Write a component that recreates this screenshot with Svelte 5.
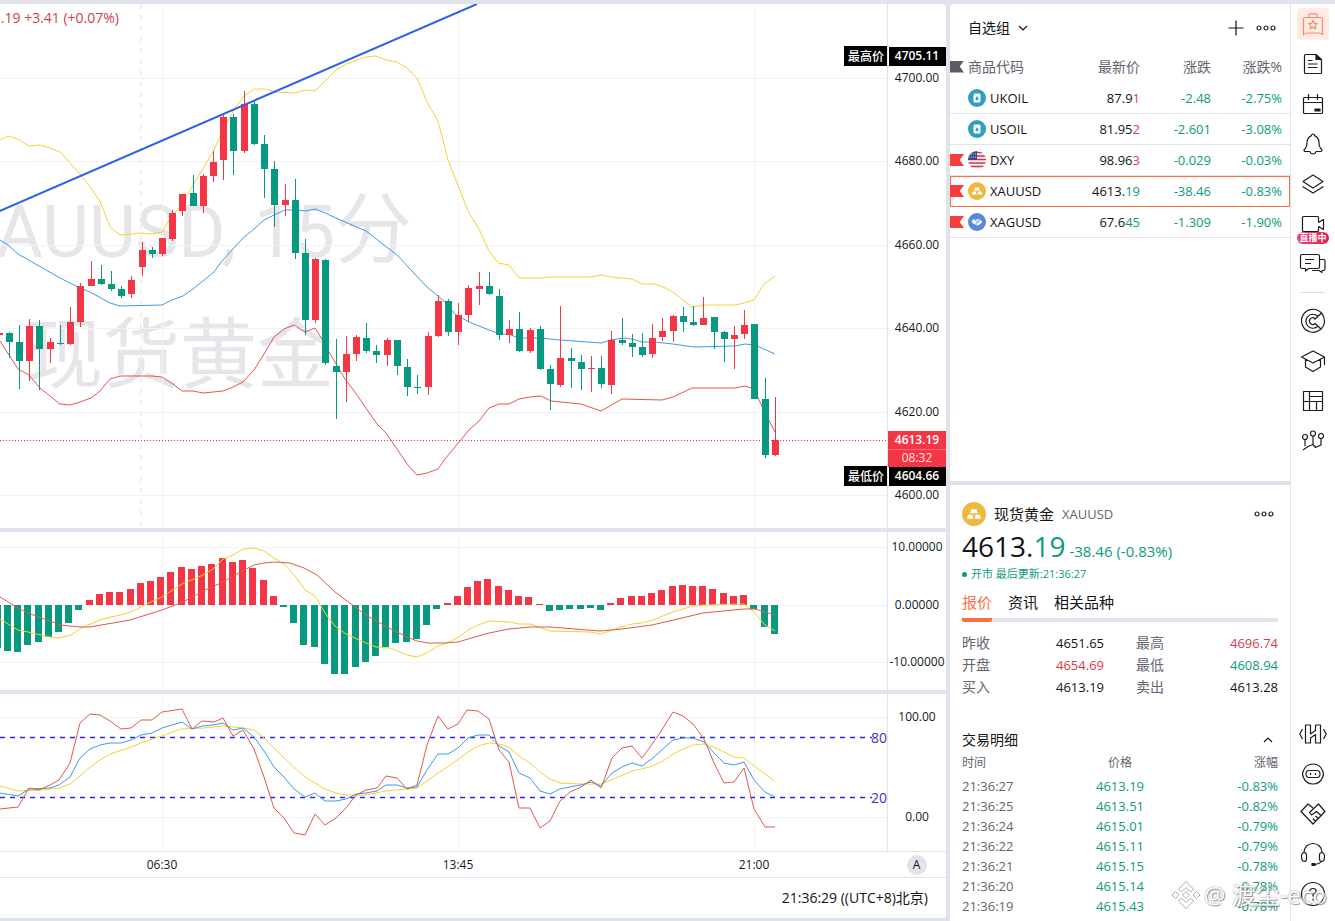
<script>
  let plotWidth = $state(887);
  let activeTab = $state('报价');
  let activeTool = $state('自选');
  let tradesOpen = $state(true);

  const UP = '#f23645';
  const DOWN = '#089981';

  // the newest bar keeps its distance from the price scale, older bars run off to the left
  let left = $derived(887 - plotWidth);

  const barX = (i) => Math.floor(10.213 * i - 0.9);
  const histX = (i) => Math.floor(10.227 * i - 2.9);

  // direction, high, body top, body bottom, low
  const candles = `
    r 333 333 335 335|g 332 333 342 358|g 325 342 361 389|r 319 326 361 381|g 320 326 349 390|r 338 342 349 363
    |g 325 343 344 345|r 307 322 344 345|r 283 286 322 327|r 261 279 286 286|g 265 279 284 285|g 271 284 289 291
    |g 286 289 296 298|r 276 280 294 298|r 242 250 267 276|g 247 250 254 258|r 238 238 254 256|r 210 213 239 241
    |r 194 194 211 216|g 175 193 206 206|r 174 176 206 213|r 151 162 176 182|r 114 117 160 180|g 114 117 151 175
    |r 91 104 151 153|g 100 104 144 145|g 135 144 169 198|g 161 169 205 227|r 184 200 205 216|g 179 200 253 259
    |g 239 253 320 335|r 258 259 320 323|g 259 260 363 365|g 339 366 372 419|r 336 354 372 402|r 335 337 354 361
    |g 323 338 351 353|g 345 351 355 363|r 338 340 355 366|g 340 340 366 375|g 359 367 387 396|g 375 387 388 394
    |r 332 336 387 395|r 295 301 336 337|g 299 301 332 336|r 303 315 332 345|r 285 288 315 322|r 272 286 289 305
    |g 272 286 294 295|g 289 296 335 340|r 320 329 335 343|g 312 329 351 352|r 328 330 351 353|g 326 329 369 370
    |g 365 369 384 410|r 306 358 385 387|g 348 358 361 388|g 355 362 369 390|r 356 368 369 392|g 356 368 384 388
    |r 331 340 385 394|g 318 340 343 345|g 334 343 347 357|g 333 347 355 357|r 324 338 354 358|r 318 331 337 341
    |r 315 316 331 342|g 307 316 322 332|g 306 322 325 326|r 297 318 325 325|g 317 317 332 349|g 331 332 339 362
    |r 326 335 339 369|r 310 325 334 339|g 324 324 399 399|g 378 399 455 458|r 397 440 455 456`
    .split('|')
    .map((row, i) => {
      const [dir, ...v] = row.trim().split(' ');
      const [high, top, bottom, low] = v.map(Number);
      return { x: barX(i), color: dir === 'r' ? UP : DOWN, high, top, bottom, low };
    });

  const ZERO = 605;
  const hist = [
    648, 651, 652, 645, 642, 637, 632, 623, 610, 600, 594, 592, 592, 589, 583, 581, 577, 572, 567, 569,
    566, 564, 558, 562, 560, 568, 580, 596, 607, 623, 645, 647, 664, 674, 674, 667, 662, 656, 647, 643,
    642, 639, 625, 609, 603, 596, 587, 581, 579, 586, 590, 596, 597, 604, 611, 610, 609, 609, 608, 610,
    603, 598, 596, 596, 593, 590, 586, 585, 586, 586, 589, 593, 596, 595, 609, 627, 634
  ];

  const boll = {
    upper: '0,140 8,136 18,139 29,146 40,145 50,148 60,152 80,174 90,187 100,201 110,227 120,235 141,233 151,234 162,232 172,216 183,203 193,185 213,152 223,130 234,110 243,97 254,89 265,89 275,92 295,93 305,90 315,91 325,81 336,70 346,64 365,57 376,56 386,60 397,62 407,68 417,78 427,102 438,121 448,160 459,188 468,211 479,229 488,249 498,263 509,265 519,278 540,278 549,277 590,277 601,275 611,277 632,279 642,284 654,284 663,287 673,292 683,300 692,307 704,305 735,305 744,303 754,300 764,284 775,276',
    middle: '0,240 8,245 18,254 46,270 60,278 80,288 90,292 110,303 120,306 162,305 172,300 183,296 193,289 203,281 214,272 222,261 233,249 243,238 254,229 264,220 274,215 285,210 295,210 305,211 315,209 325,213 345,222 366,231 397,255 411,270 427,287 438,296 445,302 455,314 469,322 489,330 500,334 509,334 518,338 540,338 560,340 601,343 611,340 623,338 632,339 642,342 654,342 673,344 693,347 735,346 745,344 755,345 775,354',
    lower: '0,341 18,369 29,375 40,388 60,404 70,405 80,402 91,398 100,391 110,379 120,376 152,376 162,377 173,384 182,391 193,391 203,393 223,391 233,387 243,382 254,370 264,354 274,337 284,329 294,325 305,332 315,328 322,339 329,352 345,379 357,395 377,424 386,433 397,449 407,464 417,475 427,473 438,469 445,459 469,430 479,421 489,408 499,404 509,404 519,399 530,397 541,396 551,401 581,404 601,411 622,399 662,400 673,397 692,388 735,388 745,386 754,389 764,411 775,432'
  };

  const macd = {
    dif: '0,619 18,630 28,632 50,637 59,638 71,635 81,628 100,620 111,617 121,615 131,612 141,607 151,602 162,597 182,584 203,575 213,569 223,559 233,555 243,549 254,548 264,551 274,558 284,564 295,576 305,590 315,596 325,613 335,626 346,634 366,643 376,647 390,648 407,655 417,657 427,653 438,646 449,642 459,637 468,630 478,625 489,621 509,622 519,624 530,624 550,631 590,632 601,634 621,627 632,624 642,623 653,620 663,616 673,612 693,606 704,605 744,604 754,612 765,625 775,631',
    dea: '0,597 18,608 28,613 50,621 60,625 70,626 80,627 90,627 130,620 162,610 183,602 203,591 223,582 244,570 254,565 264,563 275,562 290,563 304,568 317,575 335,592 366,615 387,627 407,637 417,641 428,643 445,643 458,642 468,639 489,633 509,629 530,627 550,627 600,631 622,629 652,625 682,618 703,613 733,610 744,609 755,609 765,612 775,615'
  };

  const kdj = {
    k: '0,793 18,796 29,789 50,788 59,785 70,777 80,758 90,749 100,745 110,743 121,743 131,740 141,735 152,733 162,728 182,722 192,729 202,726 213,725 223,723 233,730 243,728 254,737 264,751 274,767 284,777 294,789 305,797 315,793 325,801 336,801 346,799 356,794 366,793 377,791 386,785 397,785 407,788 417,787 427,770 438,754 448,754 458,748 468,738 478,735 489,735 499,746 509,752 519,773 530,778 540,791 550,794 560,789 570,787 581,785 591,782 601,786 612,773 622,767 632,763 642,766 653,758 663,749 673,740 683,738 693,738 704,742 714,753 724,763 734,765 744,762 754,780 765,792 775,797',
    d: '0,786 18,791 40,790 59,788 70,784 80,776 90,767 100,760 110,754 131,747 141,743 162,736 182,729 203,728 223,726 243,728 254,730 264,738 284,758 305,777 315,783 325,789 336,793 346,795 366,795 386,791 407,789 417,788 427,781 438,773 449,766 468,752 478,746 489,743 499,744 509,747 519,756 530,763 540,772 550,779 560,783 580,784 601,784 611,780 632,771 642,769 652,766 663,761 673,754 683,749 693,745 704,744 714,747 724,752 734,757 744,758 754,766 765,774 775,781',
    j: '0,809 18,807 29,788 39,790 50,785 59,780 70,763 80,723 90,714 100,715 110,721 121,729 131,728 141,720 152,720 162,712 182,709 192,729 202,721 214,722 223,718 233,736 243,730 254,749 264,777 274,808 284,818 294,833 305,835 315,814 325,825 336,818 346,808 356,795 366,790 377,788 386,776 397,778 407,789 417,785 427,745 438,716 448,729 458,724 467,710 478,711 489,719 499,750 509,762 519,808 530,808 540,828 550,821 560,801 570,792 581,787 591,780 601,788 612,758 622,748 632,746 642,758 653,743 663,728 673,712 683,716 693,724 704,739 714,763 724,783 734,782 744,768 754,809 765,827 775,827'
  };

  const times = [[162, '06:30'], [458, '13:45'], [754, '21:00']];
  const prices = [[78, '4700.00'], [161, '4680.00'], [245, '4660.00'], [328, '4640.00'], [412, '4620.00'], [495, '4600.00']];
  const macdScale = [[547, '10.00000'], [605, '0.00000'], [662, '-10.00000']];
  const kdjScale = [[717, '100.00'], [817, '0.00']];

  const watchlist = [
    { code: 'UKOIL', icon: 'oil', flag: false, head: '87.9', tail: '1', dir: 'up', chg: '-2.48', pct: '-2.75%' },
    { code: 'USOIL', icon: 'oil', flag: false, head: '81.95', tail: '2', dir: 'up', chg: '-2.601', pct: '-3.08%' },
    { code: 'DXY', icon: 'us', flag: true, head: '98.96', tail: '3', dir: 'up', chg: '-0.029', pct: '-0.03%' },
    { code: 'XAUUSD', icon: 'gold', flag: true, head: '4613.', tail: '19', dir: 'down', chg: '-38.46', pct: '-0.83%' },
    { code: 'XAGUSD', icon: 'silver', flag: true, head: '67.6', tail: '45', dir: 'down', chg: '-1.309', pct: '-1.90%' }
  ];
  let selected = $state('XAUUSD');

  const quotes = [
    ['昨收', '4651.65', ''], ['最高', '4696.74', 'up'],
    ['开盘', '4654.69', 'up'], ['最低', '4608.94', 'down'],
    ['买入', '4613.19', ''], ['卖出', '4613.28', '']
  ];

  const trades = [
    ['21:36:27', '4613.19', '-0.83%'],
    ['21:36:25', '4613.51', '-0.82%'],
    ['21:36:24', '4615.01', '-0.79%'],
    ['21:36:22', '4615.11', '-0.79%'],
    ['21:36:21', '4615.15', '-0.78%'],
    ['21:36:20', '4615.14', '-0.78%'],
    ['21:36:19', '4615.43', '-0.78%']
  ];

  const topTools = [
    ['自选', 'M4.5 8.8Q4.5 7.5 5.8 7.5H22.2Q23.5 7.5 23.5 8.8V24.5Q21.5 23 19 23H9Q6.5 23 4.5 24.5ZM10 7.5V4.8Q10 3.8 11 3.8H17Q18 3.8 18 4.8V7.5M14 10.5L15.3 13.2 18.3 13.6 16.1 15.6 16.7 18.6 14 17.2 11.3 18.6 11.9 15.6 9.7 13.6 12.7 13.2Z', ''],
    ['资讯', 'M17 4.5H6.5Q5.5 4.5 5.5 5.5V22.5Q5.5 23.5 6.5 23.5H21.5Q22.5 23.5 22.5 22.5V9.5M9 10.5H13.5M9 14H18.5M9 17.5H18.5', 'M17 4.5V9.5H22.5Z'],
    ['日历', 'M5.5 7.5H22.5Q23.5 7.5 23.5 8.5V22.5Q23.5 23.5 22.5 23.5H5.5Q4.5 23.5 4.5 22.5V8.5Q4.5 7.5 5.5 7.5ZM4.5 12.5H23.5M9.5 4V10M18.5 4V10', 'M16 19H21V21H16Z'],
    ['提醒', 'M14 4Q15.5 4 15.5 5.6Q20 7.5 20 12.5Q20 16.5 21.5 18.2L23 20Q23 21.5 21.8 21.5H17Q16.5 24 14 24Q11.5 24 11 21.5H6.2Q5 21.5 5 20L6.5 18.2Q8 16.5 8 12.5Q8 7.5 12.5 5.6Q12.5 4 14 4Z', ''],
    ['图层', 'M14 5L24 11.5 14 18 4 11.5ZM3.5 16.5L14 23 24.5 16.5', ''],
    ['直播', 'M19.5 12.5V7.5Q19.5 6.5 18.5 6.5H4.5Q3.5 6.5 3.5 7.5V20.5Q3.5 21.5 4.5 21.5H18.5Q19.5 21.5 19.5 20.5V16.5L24.5 19.5V9.5L19.5 12.5', ''],
    ['消息', 'M3 4.5H19Q20.5 4.5 20.5 6V17Q20.5 18.5 19 18.5H9.5L6.5 21V18.5H3Q1.5 18.5 1.5 17V6Q1.5 4.5 3 4.5ZM6 9.5H15M6 13.5H12M20.5 9.5H24.5Q26 9.5 26 11V19Q26 20.5 24.5 20.5H23V22.5L20 20.5H13', '']
  ];
  const moreTools = [
    ['雷达', 'M22.5 6A11.5 11.5 0 1 0 25.5 14Q25.5 9.5 22.5 6L15.5 12.5M18.5 9A7 7 0 1 0 19 19M15.8 11.5A3.3 3.3 0 1 0 16 16.5L22 22', ''],
    ['学院', 'M14 4L25.5 10 14 16 2.5 10ZM6.5 12V20L14 24.5 21.5 20V12M25.5 10V18', ''],
    ['行情', 'M4.5 4.5H23.5V23.5H4.5ZM10.5 9.5H23.5M4.5 14.5H23.5M10.5 4.5V23.5M17.5 14.5V23.5', ''],
    ['指标', 'M6 7.5A2.5 2.5 0 1 1 6 12.5A2.5 2.5 0 1 1 6 7.5ZM14 4A2.5 2.5 0 1 1 14 9A2.5 2.5 0 1 1 14 4ZM22 6.5A2.5 2.5 0 1 1 22 11.5A2.5 2.5 0 1 1 22 6.5ZM6 12.5V19M14 9V17.5M22 11.5V18L16.5 20.5 14 17.5 9 19.5 4 23', '']
  ];
  const bottomTools = [
    ['和讯', 'M3.5 9L0.8 14 3.5 19M24.5 9L27.2 14 24.5 19M6.5 5H11.5V14L16.5 10.5V5H21.5V23H16.5V14.5L11.5 18V23H6.5Z', ''],
    ['助手', 'M4.5 10.5A10.2 10.2 0 0 1 23.5 10.5Q25.5 14 23.5 17.5A10.2 10.2 0 0 1 4.5 17.5Q2.5 14 4.5 10.5ZM10 10.5H18Q21 10.5 21 14Q21 17.5 18 17.5H10Q7 17.5 7 14Q7 10.5 10 10.5ZM11.5 13V15M16.5 13V15', ''],
    ['合作', 'M14 8L9 4 2 11.5 14 24 26 11.5 19.5 4 10.5 12.5 12.5 15 17.5 11.5 22.5 16M16.5 16L19.5 19M14 18.5L16.5 21.5', ''],
    ['客服', 'M5 13V12A9 8.5 0 0 1 23 12V13M5 12.5Q7.5 12.5 7.5 15V19Q7.5 21.5 5 21.5Q2.5 21 2.5 17Q2.5 13 5 12.5ZM23 12.5Q20.5 12.5 20.5 15V19Q20.5 21.5 23 21.5Q25.5 21 25.5 17Q25.5 13 23 12.5ZM22.5 21.5Q20.5 24 16 24.5', 'M13 23.5H16V25.5H13Z'],
    ['帮助', 'M14 2.5A11.5 11.5 0 1 1 14 25.5A11.5 11.5 0 1 1 14 2.5ZM10.8 11.5Q10.8 8.5 14 8.5Q17.2 8.5 17.2 11.2Q17.2 13 14 14.2V16.5M14 18.8V20.5', '']
  ];
</script>

{#snippet grid(rows, top, bottom)}
  {#each rows as [y]}
    <line class="grid" x1={left} x2="887" y1={y + 0.5} y2={y + 0.5} />
  {/each}
  {#each times as [x]}
    <line class="grid" x1={x + 0.5} x2={x + 0.5} y1={top} y2={bottom} />
  {/each}
{/snippet}

{#snippet scale(rows)}
  {#each rows as [y, label]}
    <text class="tick" x="29" y={y + 4}>{label}</text>
  {/each}
{/snippet}

{#snippet symbol(kind)}
  <svg class="symbol" viewBox="0 0 18 18" aria-hidden="true">
    {#if kind === 'oil'}
      <circle cx="9" cy="9" r="9" fill="#2f9fc0" />
      <rect x="5.5" y="4.5" width="7" height="9" rx="1.5" fill="#fff" />
      <path d="M9 7Q10.5 9 10.5 9.8A1.5 1.5 0 0 1 7.5 9.8Q7.5 9 9 7Z" fill="#2f9fc0" />
    {:else if kind === 'us'}
      <clipPath id="disc"><circle cx="9" cy="9" r="9" /></clipPath>
      <g clip-path="url(#disc)">
        <rect width="18" height="18" fill="#f6f2f4" />
        <path d="M0 1.5H18M0 5H18M0 8.5H18M0 12H18M0 15.5H18" stroke="#cf3350" stroke-width="1.7" />
        <rect width="9" height="9" fill="#3d4a86" />
        <path d="M1 3H8M1 6H8" stroke="#c9cde2" stroke-width="1" stroke-dasharray="1 1" />
      </g>
    {:else if kind === 'gold'}
      <circle cx="9" cy="9" r="9" fill="#efb93f" />
      <path d="M7 5.5H11L11.8 8.5H6.2ZM4.6 9.5H7.8L8.6 12.5H3.8ZM10.2 9.5H13.4L14.2 12.5H9.4Z" fill="#fff" />
    {:else}
      <circle cx="9" cy="9" r="9" fill="#5b86de" />
      <path d="M3.5 8L6 6 8 7 10 5.5 14.5 8.5 13 10.5 10 12.5 7.5 12 4.5 10Z" fill="#fff" opacity="0.9" />
      <path d="M6 6L9 9 7.5 12M10 5.5L11 9 9 9" fill="none" stroke="#5b86de" stroke-width="0.6" />
    {/if}
  </svg>
{/snippet}

{#snippet toolButton([name, line, fill])}
  <button class="tool" class:on={activeTool === name} aria-label={name} onclick={() => (activeTool = name)}>
    <svg viewBox="0 0 28 28" aria-hidden="true">
      <path d={line} />
      {#if fill}<path class="solid" d={fill} />{/if}
    </svg>
    {#if name === '直播'}<span class="live">直播中</span>{/if}
  </button>
{/snippet}

{#snippet dots()}
  <svg class="dots" viewBox="0 0 20 6" aria-hidden="true">
    <circle cx="3" cy="3" r="2" /><circle cx="10" cy="3" r="2" /><circle cx="17" cy="3" r="2" />
  </svg>
{/snippet}

<div class="app">
  <main class="chart">
    <div class="pane price-pane">
      <div class="plot" bind:clientWidth={plotWidth}>
        <svg viewBox="{left} 4 {plotWidth} 524">
          <text class="watermark" x="412" y="257" text-anchor="end">XAUUSD, 15<tspan class="cjk">分</tspan></text>
          <text class="watermark cjk" x="26" y="382">现货黄金</text>
          {@render grid(prices, 4, 528)}
          <line class="session" x1="141" x2="141" y1="4" y2="528" />
          <polyline class="yellow" points={boll.upper} />
          <polyline class="blue" points={boll.middle} />
          <polyline class="red" points={boll.lower} />
          {#each candles as c}
            <rect x={c.x} y={c.high} width="1" height={c.low - c.high} fill={c.color} />
            <rect x={c.x - 3} y={c.top} width="7" height={c.bottom - c.top} fill={c.color} />
          {/each}
          <line class="trend" x1="-231" y1="311" x2="477" y2="4" />
          <line class="last" x1={left} x2="887" y1="440.5" y2="440.5" />
          <text class="legend" x="119" y="23">4613.19 +3.41 (+0.07%)</text>
          <rect x="844" y="46" width="43" height="20" />
          <text class="tag" x="866" y="61">最高价</text>
          <rect x="844" y="466" width="43" height="20" />
          <text class="tag" x="866" y="481">最低价</text>
        </svg>
      </div>
      <svg class="scale" viewBox="0 4 58 524">
        {@render scale(prices)}
        <rect x="1" y="47" width="57" height="19" />
        <text class="tick strong" x="29" y="60">4705.11</text>
        <rect x="0" y="431" width="58" height="36" fill="#f23645" />
        <line x1="0" x2="58" y1="449.5" y2="449.5" stroke="#f76c77" />
        <text class="tick strong" x="29" y="444">4613.19</text>
        <text class="tick light" x="29" y="462">08:32</text>
        <rect x="1" y="467" width="57" height="19" />
        <text class="tick strong" x="29" y="480">4604.66</text>
      </svg>
    </div>

    <div class="pane macd-pane">
      <div class="plot">
        <svg viewBox="{left} 532 {plotWidth} 158">
          {@render grid(macdScale, 532, 690)}
          {#each hist as y, i}
            <rect x={histX(i) - 3} y={Math.min(y, ZERO)} width="7" height={Math.abs(y - ZERO)} fill={y < ZERO ? UP : DOWN} />
          {/each}
          <polyline class="yellow" points={macd.dif} />
          <polyline class="red" points={macd.dea} />
        </svg>
      </div>
      <svg class="scale" viewBox="0 532 58 158">{@render scale(macdScale)}</svg>
    </div>

    <div class="pane kdj-pane">
      <div class="plot">
        <svg viewBox="{left} 694 {plotWidth} 157">
          {@render grid(kdjScale, 694, 851)}
          <path class="level" d="M{left} 737.5H872M{left} 797.5H872" />
          <polyline class="yellow" points={kdj.d} />
          <polyline class="blue" points={kdj.k} />
          <polyline class="red" points={kdj.j} />
          <text class="level-label" x="887" y="743">80</text>
          <text class="level-label" x="887" y="803">20</text>
        </svg>
      </div>
      <svg class="scale" viewBox="0 694 58 157">{@render scale(kdjScale)}</svg>
    </div>

    <div class="time-axis">
      <svg viewBox="{left} 852 {plotWidth} 25">
        {#each times as [x, label]}
          <text class="tick" {x} y="869">{label}</text>
        {/each}
      </svg>
      <div class="auto"><button aria-label="自动缩放">A</button></div>
    </div>

    <footer><button>21:36:29 ((UTC+8)北京)</button></footer>
  </main>

  <aside class="panel">
    <section class="watch">
      <header>
        <button class="group">自选组
          <svg viewBox="0 0 10 6" aria-hidden="true"><path d="M1 1L5 5 9 1" /></svg>
        </button>
        <button aria-label="添加"><svg class="plus" viewBox="0 0 16 16" aria-hidden="true"><path d="M8 0.5V15.5M0.5 8H15.5" /></svg></button>
        <button aria-label="更多">{@render dots()}</button>
      </header>
      <table>
        <thead>
          <tr>
            <th class="code"><div><span class="flag head"></span>商品代码</div></th>
            <th class="price">最新价</th>
            <th class="chg">涨跌</th>
            <th class="pct">涨跌%</th>
          </tr>
        </thead>
        <tbody>
          {#each watchlist as row}
            <tr class:selected={selected === row.code} onclick={() => (selected = row.code)}>
              <td class="code">
                <div><span class="flag" class:empty={!row.flag}></span>{@render symbol(row.icon)}<span>{row.code}</span></div>
              </td>
              <td>{row.head}<span class={row.dir}>{row.tail}</span></td>
              <td class="down">{row.chg}</td>
              <td class="pct down">{row.pct}</td>
            </tr>
          {/each}
        </tbody>
      </table>
    </section>

    <section class="detail">
      <header>
        {@render symbol('gold')}
        <h2>现货黄金</h2>
        <span class="sub">XAUUSD</span>
        <button aria-label="更多">{@render dots()}</button>
      </header>
      <div class="quote">
        <strong>4613.<span class="down">19</span></strong>
        <span class="down">-38.46 (-0.83%)</span>
      </div>
      <p class="status"><i></i>开市 最后更新:21:36:27</p>
      <nav>
        {#each ['报价', '资讯', '相关品种'] as tab}
          <button class:active={activeTab === tab} onclick={() => (activeTab = tab)}>{tab}</button>
        {/each}
      </nav>
      <dl>
        {#each quotes as [label, value, dir]}
          <div><dt>{label}</dt><dd class={dir}>{value}</dd></div>
        {/each}
      </dl>
      <button class="fold" aria-expanded={tradesOpen} onclick={() => (tradesOpen = !tradesOpen)}>
        交易明细
        <svg viewBox="0 0 10 6" aria-hidden="true"><path d="M1 5L5 1 9 5" /></svg>
      </button>
      {#if tradesOpen}
        <table class="trades">
          <thead><tr><th>时间</th><th>价格</th><th>涨幅</th></tr></thead>
          <tbody>
            {#each trades as [time, price, pct]}
              <tr><td>{time}</td><td class="down">{price}</td><td class="down">{pct}</td></tr>
            {/each}
          </tbody>
        </table>
      {/if}
    </section>
  </aside>

  <nav class="rail" aria-label="工具">
    {#each topTools as tool}{@render toolButton(tool)}{/each}
    <hr />
    {#each moreTools as tool}{@render toolButton(tool)}{/each}
    <div class="spacer"></div>
    {#each bottomTools as tool}{@render toolButton(tool)}{/each}
  </nav>

  <div class="credit">
    <svg viewBox="0 0 28 28" aria-hidden="true">
      <path d="M14 0.5L21.5 8 18.5 11 14 6.5 9.5 11 6.5 8ZM14 27.5L6.5 20 9.5 17 14 21.5 18.500 17 21.5 20ZM14 10.5L17.5 14 14 17.5 10.5 14ZM3.500 10.5L7 14 3.500 17.5 0 14ZM24.5 10.5L28 14 24.5 17.5 21 14Z" />
    </svg>
    <span>@ 渡尘-eco</span>
  </div>
</div>

<style>
  :global(body) { margin: 0; background: #e0e3eb; }

  .app {
    display: flex;
    box-sizing: border-box;
    min-height: 100vh;
    padding-top: 4px;
    color: #131313;
    font: 13px/20px 'Open Sans', 'Noto Sans CJK SC', sans-serif;
  }

  button { all: unset; cursor: pointer; }
  h2, p, dl, dd { margin: 0; }
  table { width: 100%; border-collapse: collapse; }
  th { font-weight: 400; }
  th, td { padding: 0; }
  .up { color: #e0384c; }
  .down { color: #0b9b7e; }

  /* chart */
  .chart { flex: 1; min-width: 0; margin-right: 4px; }
  .pane { display: flex; margin-bottom: 4px; background: #fff; }
  .price-pane { height: 524px; border-radius: 0 4px 0 0; }
  .macd-pane { height: 158px; }
  .kdj-pane { height: 157px; margin-bottom: 0; }
  .plot { flex: 1; min-width: 0; border-right: 1px solid #e0e3eb; }
  .plot svg { display: block; width: 100%; height: 100%; }
  .scale { flex: none; width: 58px; }

  .grid { stroke: #f2f3f5; }
  .session { stroke: #f0f0f2; stroke-width: 2; stroke-dasharray: 5 6; }
  polyline { fill: none; stroke-linejoin: round; }
  .yellow { stroke: #f6d030; }
  .blue { stroke: #3b9be6; }
  .red { stroke: #e0594f; }
  .trend { stroke: #2f62ea; stroke-width: 2; }
  .last { stroke: #e0364a; stroke-dasharray: 1 2; }
  .level { fill: none; stroke: #2f25e0; stroke-width: 1.4; stroke-dasharray: 5 5; }
  .level-label { fill: #3a34c4; font-size: 14px; text-anchor: end; }
  .watermark { fill: #e6e6ea; font: 72px Roboto, sans-serif; }
  .cjk { font-family: 'Noto Sans CJK SC', sans-serif; font-size: 77px; }
  .legend { fill: #d93a4c; font-size: 14px; text-anchor: end; }
  .tick { fill: #131722; font-size: 12px; text-anchor: middle; }
  .tag { fill: #fff; font-size: 12px; font-weight: 500; text-anchor: middle; }
  .strong { fill: #fff; font-weight: 600; }
  .light { fill: #fde3e5; }

  .time-axis {
    display: flex;
    height: 25px;
    background: #fff;
    border-top: 1px solid #e0e3eb;
    border-bottom: 1px solid #e0e3eb;
  }
  .time-axis svg { flex: 1; min-width: 0; height: 25px; }
  .auto { display: flex; align-items: center; justify-content: center; width: 59px; }
  .auto button { width: 20px; border-radius: 50%; background: #e0e3eb; font-size: 12px; text-align: center; }
  footer {
    display: flex;
    align-items: center;
    justify-content: flex-end;
    height: 40px;
    padding-right: 18px;
    background: #fff;
    border-radius: 0 0 4px 0;
    font-size: 14px;
  }

  /* right panel */
  .panel { display: flex; flex: none; flex-direction: column; gap: 4px; width: 340px; }
  .watch { flex: 1; background: #fff; border-radius: 4px 0 0 0; }
  .watch header { display: flex; align-items: center; gap: 12px; height: 48px; padding: 0 14px 0 18px; }
  header button { display: flex; align-items: center; }
  .group { gap: 8px; margin-right: auto; font-size: 14px; }
  .group svg, .fold svg { width: 10px; height: 6px; }
  .group path, .plus path, .fold path { fill: none; stroke: currentColor; stroke-width: 1.2; }
  .plus { width: 16px; height: 16px; }
  .dots { width: 20px; height: 6px; fill: none; stroke: #222; stroke-width: 1.2; }

  .watch table { table-layout: fixed; }
  .watch th { height: 29px; padding-bottom: 2px; color: #62656f; font-size: 14px; text-align: right; }
  .watch td { height: 30px; border-bottom: 1px solid #e0e3eb; text-align: right; }
  .watch .price { width: 70px; }
  .watch .chg { width: 71px; }
  .watch .pct { width: 71px; padding-right: 8px; }
  .watch .code { text-align: left; }
  .code div { display: flex; align-items: center; gap: 4px; }
  .flag {
    width: 14px;
    height: 12px;
    background: #f73c3c;
    clip-path: polygon(0 0, 100% 0, 70% 50%, 100% 100%, 0 100%);
  }
  .flag.head { background: #5a5d68; }
  .flag.empty { visibility: hidden; }
  .symbol { width: 18px; height: 18px; }
  .selected { outline: 1px solid #fa6f43; outline-offset: -1px; }

  .detail { padding: 17px 12px 5px; background: #fff; }
  .detail header { display: flex; align-items: center; gap: 8px; height: 24px; }
  .detail header .symbol { width: 24px; height: 24px; }
  .detail header button { margin-left: auto; padding-right: 4px; }
  h2 { font-size: 15px; font-weight: 400; }
  .sub { color: #62656f; }
  .quote { display: flex; align-items: baseline; gap: 4px; height: 40px; line-height: 40px; font-size: 15px; }
  .quote strong { font-size: 28px; font-weight: 400; }
  .quote strong .down { font-weight: 500; }
  .status { display: flex; align-items: center; gap: 4px; color: #0b9b7e; font-size: 11px; line-height: 16px; }
  .status i { width: 5px; height: 5px; border-radius: 50%; background: currentColor; }
  .detail nav { display: flex; gap: 16px; margin-top: 4px; box-shadow: inset 0 -4px #e0e3eb; border-radius: 0 0 2px 2px; }
  .detail nav button { height: 32px; border-bottom: 4px solid transparent; font-size: 15px; line-height: 32px; }
  .detail nav .active { border-color: #fa6f43; border-radius: 0 0 2px 2px; color: #fa6f43; }
  dl { display: grid; grid-template-columns: 1fr 1fr; column-gap: 32px; padding: 10px 0 32px; line-height: 22px; }
  dl div { display: flex; justify-content: space-between; }
  dt { color: #62656f; font-size: 14px; }
  .fold { display: flex; align-items: center; justify-content: space-between; width: 100%; padding-right: 5px; box-sizing: border-box; font-size: 14px; }
  .trades th { height: 26px; color: #62656f; font-size: 12px; }
  .trades td { height: 20px; text-align: center; }
  .trades th, .trades td { width: 33%; }
  .trades th:first-child, .trades td:first-child { color: #62656f; text-align: left; }
  .trades th:last-child, .trades td:last-child { text-align: right; }

  /* tool rail */
  .rail {
    display: flex;
    flex: none;
    flex-direction: column;
    align-items: center;
    width: 44px;
    padding-bottom: 7px;
    background: #fff;
    border-left: 1px solid #e0e3eb;
  }
  .rail hr { width: 24px; height: 1px; margin: 8px 0; border: 0; background: #dcdee5; }
  .spacer { flex: 1; }
  .tool { position: relative; display: flex; align-items: center; justify-content: center; width: 32px; height: 32px; margin: 4px 0; border-radius: 4px; }
  .tool svg { width: 28px; height: 28px; fill: none; stroke: #1c1c1c; stroke-width: 1.2; stroke-linejoin: round; }
  .tool .solid { fill: #1c1c1c; }
  .tool.on { background: #ffebe4; }
  .tool.on svg { stroke: #f98a66; }
  .live {
    position: absolute;
    bottom: -4px;
    left: 0;
    width: 32px;
    border-radius: 6px;
    background: linear-gradient(90deg, #f0427c, #e0244f);
    color: #fff;
    font-size: 9px;
    font-weight: 700;
    line-height: 12px;
    text-align: center;
  }

  .credit {
    position: fixed;
    right: 8px;
    bottom: 10px;
    display: flex;
    align-items: center;
    gap: 4px;
    color: #fff;
    font-size: 24px;
    line-height: 32px;
    opacity: 0.7;
    pointer-events: none;
    text-shadow: 0 0 2px #555, 1px 1px 1px #777;
  }
  .credit svg { width: 28px; height: 28px; fill: #fff; stroke: #888; stroke-width: 1; }
</style>
